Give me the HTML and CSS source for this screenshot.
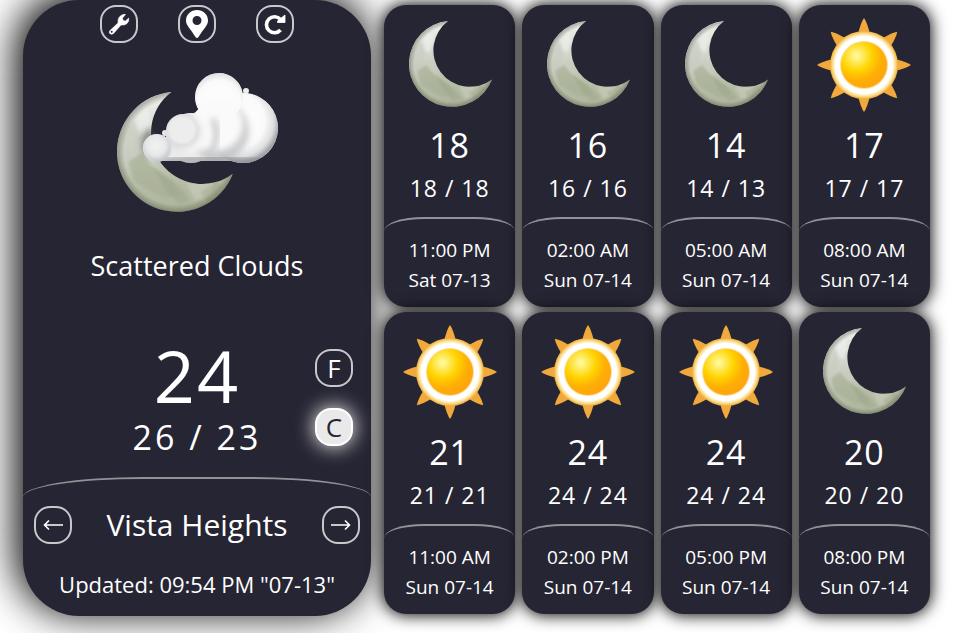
FILE: index.html
```html
<!DOCTYPE html>
<html lang="en">
<head>
<meta charset="utf-8">
<meta name="viewport" content="width=device-width, initial-scale=1">
<title>Weather</title>
<link rel="stylesheet" href="styles.css">
</head>
<body>
<svg class="defs" aria-hidden="true">
  <defs>
    <linearGradient id="moon-fill" x1="0.3" y1="0" x2="0.5" y2="1">
      <stop offset="0" stop-color="#f2f2f0"/>
      <stop offset="0.35" stop-color="#d3d6cd"/>
      <stop offset="0.7" stop-color="#b8bfaa"/>
      <stop offset="1" stop-color="#adb49b"/>
    </linearGradient>
    <radialGradient id="moon-edge" gradientUnits="userSpaceOnUse" cx="43" cy="43" r="43">
      <stop offset="0.88" stop-color="#4d5540" stop-opacity="0"/>
      <stop offset="1" stop-color="#4d5540" stop-opacity="0.45"/>
    </radialGradient>
    <clipPath id="moon-clip"><path d="M39 0A43 43 0 1 0 83 58.500A36 36 0 0 1 39 0Z"/></clipPath>
    <filter id="soft" x="-20%" y="-20%" width="140%" height="140%"><feGaussianBlur stdDeviation="1"/></filter>
    <filter id="haze" x="-50%" y="-50%" width="200%" height="200%"><feGaussianBlur stdDeviation="3"/></filter>
    <symbol id="moon" viewBox="0 0 86 86">
      <g clip-path="url(#moon-clip)">
        <rect width="86" height="86" fill="url(#moon-fill)"/>
        <g filter="url(#soft)">
          <path d="M4 30L12 20L16 34L13 48L6 54L1 44Z" fill="#c8ccc1" opacity=".7"/>
          <path d="M8 50L17 44L25 53L40 64L46 74L34 76L22 70L12 64Z" fill="#a5ae93" opacity=".6"/>
          <path d="M26 54L34 60L46 68L52 78L44 80L36 72Z" fill="#98a284" opacity=".4"/>
          <path d="M14 18L22 10L24 20L20 32L16 28Z" fill="#f0f1ee" opacity=".6"/>
          <path d="M50 66L60 64L70 66L66 74L56 78Z" fill="#c6ccb9" opacity=".7"/>
          <path d="M60 72L72 64L76 68L66 80Z" fill="#979f84" opacity=".4"/>
          <path d="M20 36L24 46L30 54L24 52L18 44Z" fill="#c9cec0" opacity=".8"/>
        </g>
        <circle cx="43" cy="43" r="43" fill="url(#moon-edge)"/>
      </g>
    </symbol>

    <radialGradient id="sun-core" cx=".34" cy=".3" r=".72">
      <stop offset="0" stop-color="#fffca8"/>
      <stop offset="0.45" stop-color="#ffd400"/>
      <stop offset="0.75" stop-color="#ffae06"/>
      <stop offset="1" stop-color="#ffa50d"/>
    </radialGradient>
    <radialGradient id="sun-ring">
      <stop offset="0.84" stop-color="#fff"/>
      <stop offset="0.92" stop-color="#fbdf8c"/>
      <stop offset="1" stop-color="#f0a93a"/>
    </radialGradient>
    <symbol id="sun" viewBox="-47 -47 94 94">
      <g fill="#f0a93a">
        <path id="ray" d="M0-47Q3-43 6-31H-6Q-3-43 0-47Z"/>
        <use href="#ray" transform="rotate(45)"/>
        <use href="#ray" transform="rotate(90)"/>
        <use href="#ray" transform="rotate(135)"/>
        <use href="#ray" transform="rotate(180)"/>
        <use href="#ray" transform="rotate(225)"/>
        <use href="#ray" transform="rotate(270)"/>
        <use href="#ray" transform="rotate(315)"/>
      </g>
      <circle r="34" fill="url(#sun-ring)"/>
      <circle r="24" fill="#fbdc90"/>
      <circle r="23" fill="url(#sun-core)"/>
    </symbol>

    <radialGradient id="puff" cx=".42" cy=".4" r=".6">
      <stop offset="0" stop-color="#fff"/>
      <stop offset="0.65" stop-color="#fafafa"/>
      <stop offset="0.87" stop-color="#dcddde"/>
      <stop offset="1" stop-color="#a2a4a7"/>
    </radialGradient>
    <radialGradient id="puff-small" cx=".47" cy=".42" r=".6">
      <stop offset="0" stop-color="#f3f3f4"/>
      <stop offset="0.6" stop-color="#e6e7e8"/>
      <stop offset="1" stop-color="#b9bbbd"/>
    </radialGradient>
    <radialGradient id="puff-top" cx=".5" cy=".6" r=".6">
      <stop offset="0" stop-color="#fff"/>
      <stop offset="0.75" stop-color="#fafafa"/>
      <stop offset="1" stop-color="#dddedf"/>
    </radialGradient>
    <clipPath id="cloud-clip">
      <circle cx="128" cy="57" r="35"/>
      <circle cx="104" cy="26" r="24"/>
      <circle cx="104" cy="60" r="30"/>
      <circle cx="76" cy="67" r="25"/>
      <circle cx="68" cy="60" r="17"/>
      <circle cx="42" cy="77" r="14"/>
      <rect x="42" y="70" width="80" height="20"/>
      <circle cx="82" cy="46" r="5"/>
      <circle cx="50" cy="62" r="3"/>
      <circle cx="131" cy="20" r="3"/>
    </clipPath>
  </defs>
</svg>

<main class="weather">
  <section class="current" aria-label="Current weather">
    <nav class="tools">
      <button class="round" type="button" aria-label="Settings">
        <svg width="22" height="22" viewBox="0 0 22 22"><path d="M2 17.500L10 10Q9.500 4 14 2Q16 1 17.500 1.500L14.500 5L15 7.500L17.500 8L20.700 5Q21.500 8 19 10.500Q16.500 12.500 13 12L5.500 20.500Q3.500 22 1.800 20.500Q.5 19 2 17.500Z" fill="#fff" stroke="#fff" stroke-width=".6"/><circle cx="3.700" cy="18.700" r="1" fill="#262533"/></svg>
      </button>
      <button class="round" type="button" aria-label="Location">
        <svg width="22" height="28" viewBox="0 0 22 28"><path fill="#fff" fill-rule="evenodd" d="M11 0C5 0 0 4.500 0 10.500C0 15.500 4 18 9.500 27Q11 29 12.500 27C18 18 22 15.500 22 10.500C22 4.500 17 0 11 0ZM11 6A4.500 4.500 0 1 1 11 15A4.500 4.500 0 1 1 11 6Z"/></svg>
      </button>
      <button class="round" type="button" aria-label="Refresh">
        <svg width="22" height="22" viewBox="0 0 22 22"><path d="M16.500 17A8 8 0 1 1 16.500 6.500" fill="none" stroke="#fff" stroke-width="3.600"/><path d="M21 2V9.500H13.500V8Z" fill="#fff" stroke="#fff" stroke-width=".8"/></svg>
      </button>
    </nav>

    <svg class="hero" viewBox="0 0 164 142" role="img" aria-label="Scattered clouds at night">
      <use href="#moon" x="2" y="21" width="120" height="120"/>
      <ellipse cx="34" cy="72" rx="8" ry="14" fill="#4b4d48" opacity=".5" filter="url(#haze)"/>
      <g clip-path="url(#cloud-clip)">
        <rect width="164" height="100" fill="#ebebec"/>
        <circle cx="128" cy="57" r="35" fill="url(#puff)"/>
        <circle cx="104" cy="60" r="30" fill="#b9bbbd" filter="url(#haze)" opacity=".75"/>
        <circle cx="104" cy="26" r="24" fill="url(#puff-top)"/>
        <circle cx="101" cy="53" r="27" fill="#fafafa" filter="url(#haze)"/>
        <path d="M98 48Q106 66 94 84" fill="none" stroke="#c9cacc" stroke-width="6" filter="url(#haze)"/>
        <circle cx="78" cy="66" r="16" fill="#f7f7f7" filter="url(#haze)"/>
        <path d="M28 93L160 93" stroke="#808388" stroke-width="10" filter="url(#soft)" opacity=".25"/>
        <path d="M40 94Q80 84 160 94" fill="none" stroke="#85888c" stroke-width="10" filter="url(#haze)" opacity=".6"/>
        <circle cx="68" cy="60" r="17" fill="#c4c6c8" filter="url(#haze)" opacity=".6"/>
        <circle cx="67" cy="59" r="14" fill="#ededee" filter="url(#soft)"/>
        <circle cx="42" cy="77" r="14" fill="url(#puff-small)" filter="url(#soft)"/>
      </g>
    </svg>

    <h1 class="condition">Scattered Clouds</h1>

    <div class="reading">
      <div class="temps">
        <p class="now">24</p>
        <p class="range">26 / 23</p>
      </div>
      <div class="units">
        <button class="round" type="button">F</button>
        <button class="round selected" type="button" aria-pressed="true">C</button>
      </div>
    </div>

    <footer class="place">
      <div class="place-row">
        <button class="round" type="button" aria-label="Previous place"><svg width="20" height="12" viewBox="0 0 20 12"><path d="M20 6H1.500M6 1.500L1.500 6L6 10.500" fill="none" stroke="#fff" stroke-width="1.600"/></svg></button>
        <h2 class="city">Vista Heights</h2>
        <button class="round" type="button" aria-label="Next place"><svg width="20" height="12" viewBox="0 0 20 12"><path d="M0 6H18.500M14 1.500L18.500 6L14 10.500" fill="none" stroke="#fff" stroke-width="1.600"/></svg></button>
      </div>
      <p class="updated">Updated: 09:54 PM "07-13"</p>
    </footer>
  </section>

  <section class="forecast" aria-label="Forecast">
    <article class="card"><svg class="icon" viewBox="0 0 94 94"><use href="#moon" x="6" y="3" width="86" height="86"/></svg><p class="temp">18</p><p class="minmax">18 / 18</p><div class="when"><p>11:00 PM</p><p>Sat 07-13</p></div></article>
    <article class="card"><svg class="icon" viewBox="0 0 94 94"><use href="#moon" x="6" y="3" width="86" height="86"/></svg><p class="temp">16</p><p class="minmax">16 / 16</p><div class="when"><p>02:00 AM</p><p>Sun 07-14</p></div></article>
    <article class="card"><svg class="icon" viewBox="0 0 94 94"><use href="#moon" x="6" y="3" width="86" height="86"/></svg><p class="temp">14</p><p class="minmax">14 / 13</p><div class="when"><p>05:00 AM</p><p>Sun 07-14</p></div></article>
    <article class="card"><svg class="icon" viewBox="0 0 94 94"><use href="#sun" width="94" height="94"/></svg><p class="temp">17</p><p class="minmax">17 / 17</p><div class="when"><p>08:00 AM</p><p>Sun 07-14</p></div></article>
    <article class="card"><svg class="icon" viewBox="0 0 94 94"><use href="#sun" width="94" height="94"/></svg><p class="temp">21</p><p class="minmax">21 / 21</p><div class="when"><p>11:00 AM</p><p>Sun 07-14</p></div></article>
    <article class="card"><svg class="icon" viewBox="0 0 94 94"><use href="#sun" width="94" height="94"/></svg><p class="temp">24</p><p class="minmax">24 / 24</p><div class="when"><p>02:00 PM</p><p>Sun 07-14</p></div></article>
    <article class="card"><svg class="icon" viewBox="0 0 94 94"><use href="#sun" width="94" height="94"/></svg><p class="temp">24</p><p class="minmax">24 / 24</p><div class="when"><p>05:00 PM</p><p>Sun 07-14</p></div></article>
    <article class="card"><svg class="icon" viewBox="0 0 94 94"><use href="#moon" x="6" y="3" width="86" height="86"/></svg><p class="temp">20</p><p class="minmax">20 / 20</p><div class="when"><p>08:00 PM</p><p>Sun 07-14</p></div></article>
  </section>
</main>
</body>
</html>
```
FILE: styles.css
```css
* {
  box-sizing: border-box;
}

body {
  margin: 0;
  background: #fff;
  color: #fff;
  font-family: "Open Sans", "Noto Sans", sans-serif;
}

h1, h2, p {
  margin: 0;
  font-weight: 400;
}

.defs {
  position: absolute;
  width: 0;
  height: 0;
}

.weather {
  display: grid;
  grid-template-columns: 348fr 546fr;
  column-gap: 13px;
  align-items: start;
  padding: 0 27px 17px 23px;
  overflow: hidden;
}

.current {
  display: flex;
  flex-direction: column;
  align-items: stretch;
  border-radius: 56px;
  background: #262533;
  box-shadow: -5px -5px 40px 2px #000;
}

.tools {
  display: flex;
  justify-content: center;
  gap: 40px;
  padding-top: 5px;
}

.round {
  display: flex;
  align-items: center;
  justify-content: center;
  width: 38px;
  height: 38px;
  padding: 0;
  border: 2px solid rgba(255, 255, 255, 0.75);
  border-radius: 16px;
  background: transparent;
  color: #fff;
  font: 26px/32px "Open Sans", "Noto Sans", sans-serif;
}

.selected {
  border-color: #fff;
  background: #e9e9e9;
  color: #262533;
  box-shadow: 0 0 20px #fff;
}

.hero {
  align-self: center;
  width: 164px;
  height: 142px;
  margin-top: 28px;
}

.condition {
  margin-top: 33px;
  text-align: center;
  font-size: 27px;
  line-height: 40px;
}

.reading {
  display: grid;
  grid-template-columns: 1fr auto 1fr;
  align-items: center;
  height: 120px;
  margin-top: 49px;
  padding: 0 18px;
}

.temps {
  grid-column: 2;
  text-align: center;
}

.now {
  font-size: 72px;
  line-height: 80px;
  letter-spacing: 2px;
}

.range {
  font-size: 34px;
  line-height: 44px;
  letter-spacing: 3px;
}

.units {
  display: grid;
  gap: 21px;
  justify-self: end;
}

.place {
  margin-top: 22px;
  padding: 26px 11px 17px;
  border-top: 2px solid rgba(255, 255, 255, 0.5);
  border-radius: 120px 120px 56px 56px / 20px 20px 56px 56px;
}

.place-row {
  display: flex;
  align-items: center;
  justify-content: space-between;
}

.city {
  font-size: 30px;
  line-height: 40px;
}

.updated {
  margin-top: 24px;
  text-align: center;
  font-size: 22px;
  line-height: 30px;
}

.forecast {
  display: grid;
  grid-template-columns: repeat(4, 1fr);
  gap: 5px 7px;
  padding-top: 5px;
}

.card {
  display: flex;
  flex-direction: column;
  padding-top: 13px;
  border-radius: 22px;
  background: #262533;
  box-shadow: 0 0 16px 1px #000;
  text-align: center;
}

.icon {
  align-self: center;
  width: 94px;
  height: 94px;
}

.temp {
  margin-top: 11px;
  font-size: 34px;
  line-height: 44px;
  letter-spacing: 1px;
}

.minmax {
  margin-top: 4px;
  font-size: 23px;
  line-height: 34px;
  letter-spacing: 1px;
}

.when {
  margin-top: 12px;
  padding: 16px 0 12px;
  border-top: 2px solid rgba(255, 255, 255, 0.5);
  border-radius: 40px 40px 22px 22px / 14px 14px 22px 22px;
  font-size: 19px;
  line-height: 30px;
}
```
